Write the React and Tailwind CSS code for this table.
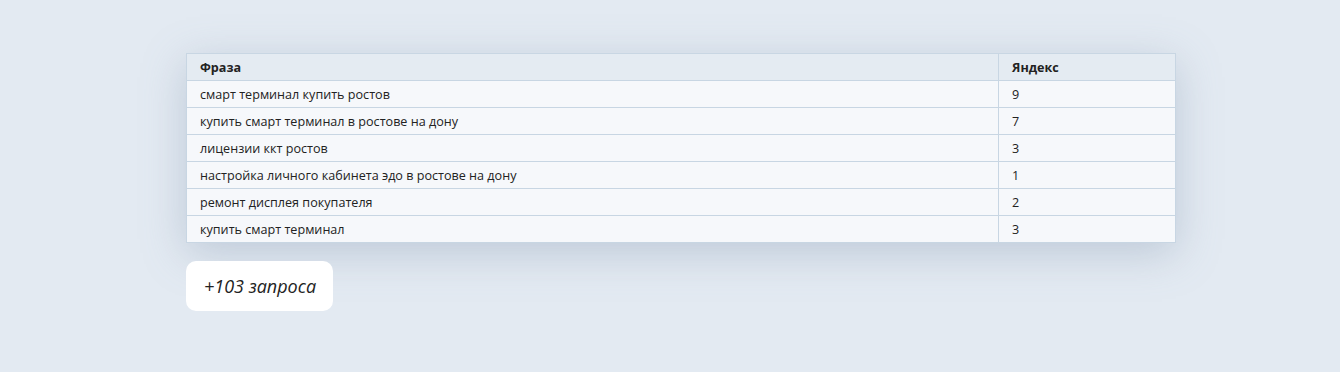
const rows = [
  ['смарт терминал купить ростов', 9],
  ['купить смарт терминал в ростове на дону', 7],
  ['лицензии ккт ростов', 3],
  ['настройка личного кабинета эдо в ростове на дону', 1],
  ['ремонт дисплея покупателя', 2],
  ['купить смарт терминал', 3],
]

export default function App() {
  return (
    <div className="min-h-[372px] bg-[#e3eaf2] pt-[53px] pl-[186px] font-['Open_Sans',sans-serif] text-[#222]">
      {/* Table */}
      <div className="w-[990px] shadow-[0_10px_40px_rgba(120,140,165,0.35)]">
        <table className="w-full border-collapse text-[12.6px] leading-[24px]">
          <thead>
            <tr className="bg-[#e4ebf2]">
              <th className="w-[812px] border border-[#c8d6e3] px-[13px] pt-[2px] text-left font-bold">Фраза</th>
              <th className="border border-[#c8d6e3] px-[13px] pt-[2px] text-left font-bold">Яндекс</th>
            </tr>
          </thead>
          <tbody>
            {rows.map(([phrase, count]) => (
              <tr key={phrase} className="bg-[#f6f8fb]">
                <td className="border border-[#c8d6e3] px-[13px] pt-[2px]">{phrase}</td>
                <td className="border border-[#c8d6e3] px-[13px] pt-[2px]">{count}</td>
              </tr>
            ))}
          </tbody>
        </table>
      </div>

      {/* More button */}
      <div className="mt-[18px] inline-flex h-[50px] items-center rounded-[10px] bg-white pl-[18px] pr-[17px] text-[18px] italic text-[#222]">
        +103 запроса
      </div>
    </div>
  )
}
